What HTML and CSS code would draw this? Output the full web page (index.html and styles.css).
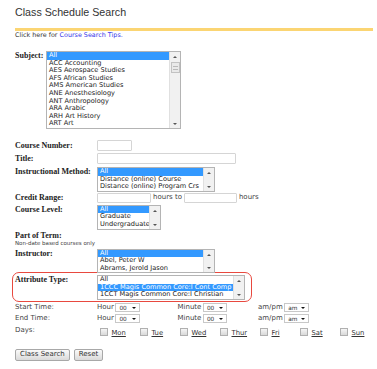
FILE: index.html
```html
<!DOCTYPE html>
<html lang="en">
<head>
    <meta charset="UTF-8">
    <meta name="viewport" content="width=device-width, initial-scale=1.0">
    <title>Class Schedule Search</title>
    <link rel="stylesheet" href="styles.css">
</head>
<body>
<div id="page">
    <div id="header">
        <h1>Class Schedule Search</h1>
    </div>
    <p class="tips">Click here for <a href="#">Course Search Tips.</a></p>

    <div class="subjectRow">
        <span class="label subjectLabel">Subject:</span>
        <div class="listbox subjectBox">
            <div class="options">
                <div class="option selected">All</div>
                <div class="option">ACC Accounting</div>
                <div class="option">AES Aerospace Studies</div>
                <div class="option">AFS African Studies</div>
                <div class="option">AMS American Studies</div>
                <div class="option">ANE Anesthesiology</div>
                <div class="option">ANT Anthropology</div>
                <div class="option">ARA Arabic</div>
                <div class="option">ARH Art History</div>
                <div class="option">ART Art</div>
            </div>
            <div class="scrollbar">
                <span class="arrowUp"></span>
                <span class="thumb"></span>
                <span class="arrowDown"></span>
            </div>
        </div>
    </div>

    <div class="fields">
        <div class="row center rowNumber">
            <div class="label">Course Number:</div>
            <input class="text numberInput" type="text">
        </div>
        <div class="row center rowTitle">
            <div class="label">Title:</div>
            <input class="text titleInput" type="text">
        </div>
        <div class="row rowMethod">
            <div class="label">Instructional Method:</div>
            <div class="listbox methodBox">
                <div class="options">
                    <div class="option selected">All</div>
                    <div class="option">Distance (online) Course</div>
                    <div class="option">Distance (online) Program Crs</div>
                </div>
                <div class="scrollbar">
                    <span class="arrowUp"></span>
                    <span class="arrowDown"></span>
                </div>
            </div>
        </div>
        <div class="row center rowCredit">
            <div class="label">Credit Range:</div>
            <input class="text creditInput" type="text">
            <span class="plain gapText">hours to</span>
            <input class="text creditInput2" type="text">
            <span class="plain hoursText">hours</span>
        </div>
        <div class="row rowLevel">
            <div class="label">Course Level:</div>
            <div class="listbox levelBox">
                <div class="options">
                    <div class="option selected">All</div>
                    <div class="option">Graduate</div>
                    <div class="option">Undergraduate</div>
                </div>
                <div class="scrollbar">
                    <span class="arrowUp"></span>
                    <span class="arrowDown"></span>
                </div>
            </div>
        </div>
        <div class="termRow">
            <div class="label">Part of Term:</div>
            <div class="note">Non-date based courses only</div>
        </div>
        <div class="row rowInstructor">
            <div class="label">Instructor:</div>
            <div class="listbox instructorBox">
                <div class="options">
                    <div class="option selected">All</div>
                    <div class="option">Abel, Peter W</div>
                    <div class="option">Abrams, Jerold Jason</div>
                </div>
                <div class="scrollbar">
                    <span class="arrowUp"></span>
                    <span class="arrowDown"></span>
                </div>
            </div>
        </div>
        <div class="row highlightBox">
            <div class="label">Attribute Type:</div>
            <div class="listbox attributeBox">
                <div class="options">
                    <div class="option">All</div>
                    <div class="option selected">1CCC Magis Common Core:I Cont Comp</div>
                    <div class="option">1CCT Magis Common Core:I Christian</div>
                </div>
                <div class="scrollbar">
                    <span class="arrowUp"></span>
                    <span class="arrowDown"></span>
                </div>
            </div>
        </div>

        <div class="timeRow rowStart">
            <div class="plain plainLabel">Start Time:</div>
            <div class="timeGroup"><span class="plain">Hour</span><span class="dropdown w25">00</span></div>
            <div class="timeGroup"><span class="plain">Minute</span><span class="dropdown w24">00</span></div>
            <div class="timeGroup"><span class="plain">am/pm</span><span class="dropdown w25">am</span></div>
        </div>
        <div class="timeRow rowEnd">
            <div class="plain plainLabel">End Time:</div>
            <div class="timeGroup"><span class="plain">Hour</span><span class="dropdown w25">00</span></div>
            <div class="timeGroup"><span class="plain">Minute</span><span class="dropdown w24">00</span></div>
            <div class="timeGroup"><span class="plain">am/pm</span><span class="dropdown w25">am</span></div>
        </div>
        <div class="daysRow">
            <div class="plain plainLabel daysLabel">Days:</div>
            <div class="dayCell"><span class="check"></span><a href="#" class="dayName">Mon</a></div>
            <div class="dayCell"><span class="check"></span><a href="#" class="dayName">Tue</a></div>
            <div class="dayCell"><span class="check"></span><a href="#" class="dayName">Wed</a></div>
            <div class="dayCell"><span class="check"></span><a href="#" class="dayName">Thur</a></div>
            <div class="dayCell"><span class="check"></span><a href="#" class="dayName">Fri</a></div>
            <div class="dayCell"><span class="check"></span><a href="#" class="dayName">Sat</a></div>
            <div class="dayCell"><span class="check"></span><a href="#" class="dayName">Sun</a></div>
        </div>
    </div>

    <div class="buttons">
        <button type="button">Class Search</button>
        <button type="button">Reset</button>
    </div>
</div>
</body>
</html>
```

FILE: styles.css
```css
body {
    margin: 0;
    font-family: "DejaVu Sans", Verdana, sans-serif;
    color: #333;
    background-color: #fff;
}

#page {
    padding: 0 4px 0 15px;
}

#header {
    padding: 6px 0 9px;
    border-bottom: 3px solid #fbd573;
}

h1 {
    margin: 0;
    font: normal 10.7px/13px "Liberation Sans", Arial, sans-serif;
    color: #333;
}

.tips {
    margin: 0;
    font-size: 6.4px;
    line-height: 8px;
    color: #333;
}

.tips a {
    color: #3535e8;
    text-decoration: none;
}

.label {
    font: bold 8px/9px "Liberation Serif", "Times New Roman", serif;
    color: #222;
}

.plain {
    font-size: 7px;
    line-height: 9px;
    color: #444;
    white-space: nowrap;
}

/* listboxes */
.subjectRow {
    display: flex;
    align-items: flex-start;
    margin-top: 12px;
}

.subjectLabel {
    width: 31px;
}

.listbox {
    display: flex;
    box-sizing: border-box;
    border: 1px solid #b4b4b4;
    background-color: #fff;
}

.options {
    flex: 1;
    overflow: hidden;
}

.option {
    font-size: 6.6px;
    line-height: 7.6px;
    padding-left: 2px;
    white-space: nowrap;
    color: #222;
}

.option.selected {
    background-color: #3399ff;
    color: #fff;
}

.scrollbar {
    width: 11px;
    box-sizing: border-box;
    background-color: #f1f1f1;
    border-left: 1px solid #e0e0e0;
    display: flex;
    flex-direction: column;
    align-items: center;
    padding: 4px 0 3px;
}

.arrowUp {
    width: 0;
    height: 0;
    border-left: 2px solid transparent;
    border-right: 2px solid transparent;
    border-bottom: 2px solid #555;
}

.arrowDown {
    width: 0;
    height: 0;
    margin-top: auto;
    border-left: 2px solid transparent;
    border-right: 2px solid transparent;
    border-top: 2px solid #555;
}

.thumb {
    width: 9px;
    height: 11px;
    margin-top: 4px;
    box-sizing: border-box;
    border: 1px solid #c2c2c2;
    background: repeating-linear-gradient(#e9e9e9 0, #e9e9e9 2px, #b9b9b9 2px, #b9b9b9 3px);
    background-size: 5px 7px;
    background-position: center 1px;
    background-repeat: no-repeat;
    background-color: #e9e9e9;
}

.subjectBox {
    width: 135px;
}

.methodBox,
.instructorBox {
    width: 118px;
}

.levelBox {
    width: 64px;
}

.attributeBox {
    width: 148px;
}

/* form rows */
.fields {
    margin-top: 11px;
}

.row {
    display: flex;
    align-items: flex-start;
}

.row.center {
    align-items: center;
}

.row > .label {
    width: 82px;
    flex: none;
}

.rowTitle {
    margin-top: 2px;
}

.rowMethod {
    margin-top: 3px;
}

.rowCredit {
    margin-top: 1px;
}

.rowLevel {
    margin-top: 2px;
}

.termRow {
    margin-top: 1px;
}

.note {
    font-size: 5.5px;
    line-height: 6px;
    color: #444;
}

.rowInstructor {
    margin-top: 3px;
}

.text {
    box-sizing: border-box;
    height: 11px;
    margin: 0;
    padding: 0;
    border: 1px solid #d5d5d5;
    border-radius: 1px;
    background-color: #fff;
}

.numberInput {
    width: 35px;
}

.titleInput {
    width: 139px;
}

.creditInput {
    width: 54px;
    height: 10px;
}

.creditInput2 {
    width: 53px;
    height: 10px;
}

.gapText {
    margin: 0 2px;
}

.hoursText {
    margin-left: 2px;
}

.highlightBox {
    width: 240px;
    box-sizing: border-box;
    margin: -1px 0 0 -3px;
    padding: 2px 0 1px 2px;
    border: 1px solid #e8493f;
    border-radius: 7px;
}

/* time and day rows */
.timeRow {
    display: flex;
    align-items: center;
    height: 9px;
}

.rowStart {
    margin-top: 1px;
}

.rowEnd {
    margin-top: 2px;
}

.plainLabel {
    width: 82px;
    flex: none;
}

.timeGroup {
    display: flex;
    align-items: center;
    width: 80.5px;
    flex: none;
}

.dropdown {
    display: flex;
    align-items: center;
    justify-content: space-between;
    box-sizing: border-box;
    height: 9px;
    margin-left: 1.5px;
    padding: 0 3px;
    border: 1px solid #c8c8c8;
    font-size: 5.8px;
    color: #333;
}

.dropdown::after {
    content: "";
    width: 0;
    height: 0;
    border-left: 2px solid transparent;
    border-right: 2px solid transparent;
    border-top: 2px solid #111;
}

.w25 {
    width: 25px;
}

.w24 {
    width: 24px;
}

.daysRow {
    display: flex;
    align-items: flex-start;
    margin-top: 4.5px;
}

.daysLabel {
    margin-top: -2px;
}

.dayCell {
    display: flex;
    align-items: flex-start;
    width: 40px;
    flex: none;
}

.check {
    width: 8px;
    height: 8px;
    margin-left: 3px;
    box-sizing: border-box;
    border: 1px solid #b0b0b0;
    background: linear-gradient(#f6f6f6, #d9d9d9);
}

.dayName {
    margin: 1.5px 0 0 3.5px;
    font-size: 6.8px;
    line-height: 8px;
    color: #333;
    text-decoration: underline;
}

.buttons {
    display: flex;
    gap: 4px;
    margin-top: 12px;
}

button {
    box-sizing: border-box;
    height: 11.5px;
    margin: 0;
    padding: 0 4px;
    font-family: "DejaVu Sans", Verdana, sans-serif;
    font-size: 7px;
    line-height: 9px;
    color: #333;
    background: linear-gradient(#fafafa, #dadada);
    border: 1px solid #a8a8a8;
    border-radius: 2px;
    cursor: pointer;
}
```
